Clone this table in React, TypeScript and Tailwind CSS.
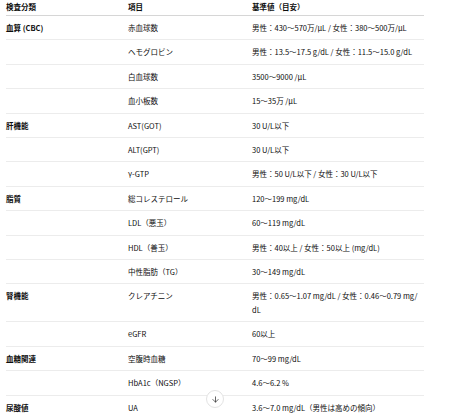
import { ArrowDown } from 'lucide-react';

type Row = { group?: string; item: string; value: React.ReactNode };

const rows: Row[] = [
  { group: '血算 (CBC)', item: '赤血球数', value: '男性：430〜570万/μL / 女性：380〜500万/μL' },
  { item: 'ヘモグロビン', value: '男性：13.5〜17.5 g/dL / 女性：11.5〜15.0 g/dL' },
  { item: '白血球数', value: '3500〜9000 /μL' },
  { item: '血小板数', value: '15〜35万 /μL' },
  { group: '肝機能', item: 'AST(GOT)', value: '30 U/L以下' },
  { item: 'ALT(GPT)', value: '30 U/L以下' },
  { item: 'γ-GTP', value: '男性：50 U/L以下 / 女性：30 U/L以下' },
  { group: '脂質', item: '総コレステロール', value: '120〜199 mg/dL' },
  { item: 'LDL（悪玉）', value: '60〜119 mg/dL' },
  { item: 'HDL（善玉）', value: '男性：40以上 / 女性：50以上 (mg/dL)' },
  { item: '中性脂肪（TG）', value: '30〜149 mg/dL' },
  {
    group: '腎機能',
    item: 'クレアチニン',
    value: (
      <>
        男性：0.65〜1.07 mg/dL / 女性：0.46〜0.79 mg/
        <br />
        dL
      </>
    ),
  },
  { item: 'eGFR', value: '60以上' },
  { group: '血糖関連', item: '空腹時血糖', value: '70〜99 mg/dL' },
  { item: 'HbA1c（NGSP）', value: '4.6〜6.2 %' },
  { group: '尿酸値', item: 'UA', value: '3.6〜7.0 mg/dL（男性は高めの傾向）' },
];

export default function App() {
  return (
    <div
      className="relative h-[416px] w-[450px] overflow-hidden bg-white text-[7.5px] leading-[13.4px] text-[#0d0d0d]"
      style={{ fontFamily: '"Noto Sans CJK JP", sans-serif' }}
    >
      {/* Lab test table */}
      <table className="ml-[6px] w-[418px] table-fixed border-collapse">
        <colgroup>
          <col className="w-[116px]" />
          <col className="w-[124px]" />
          <col className="w-[178px]" />
        </colgroup>
        <thead>
          <tr>
            <th className="border-b border-[#d6d6d6] pb-[1.6px] pl-0 text-left font-bold">検査分類</th>
            <th className="border-b border-[#d6d6d6] pb-[1.6px] pl-[6px] text-left font-bold">項目</th>
            <th className="border-b border-[#d6d6d6] pb-[1.6px] pl-[6px] text-left font-bold">基準値（目安）</th>
          </tr>
        </thead>
        <tbody>
          {rows.map((r, i) => (
            <tr key={i} className="align-top">
              <td className="border-b border-[#ececec] py-[5px] pl-0 font-bold">{r.group ?? ''}</td>
              <td className="border-b border-[#ececec] py-[5px] pl-[6px]">{r.item}</td>
              <td className="border-b border-[#ececec] py-[5px] pl-[6px] pr-[4px]">{r.value}</td>
            </tr>
          ))}
        </tbody>
      </table>

      {/* Scroll-down button */}
      <button className="absolute left-[206px] top-[390px] flex h-[18px] w-[18px] items-center justify-center rounded-full border border-[#e3e3e3] bg-white text-[#333]">
        <ArrowDown size={9} strokeWidth={2} />
      </button>
    </div>
  );
}
